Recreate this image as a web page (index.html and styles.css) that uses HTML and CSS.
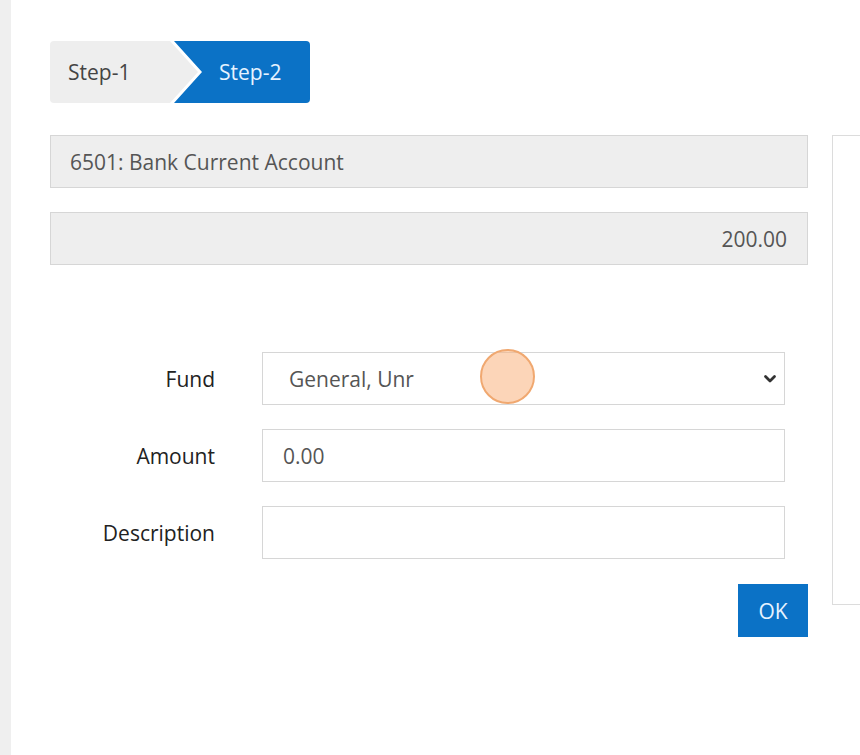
FILE: index.html
```html
<!DOCTYPE html>
<html>
<head>
<meta charset="utf-8">
<link rel="stylesheet" href="styles.css">
</head>
<body>
<div class="page">
  <div class="sidebar"></div>
  <div class="main">
    <div class="steps">
      <div class="step step-1">Step-1</div>
      <div class="step step-2">Step-2</div>
    </div>
    <div class="content">
      <div class="form-col">
        <div class="readonly">6501: Bank Current Account</div>
        <div class="readonly right">200.00</div>
        <div class="form">
          <label class="label">Fund</label>
          <div class="select-wrap">
            <select class="control select"><option>General, Unr</option></select>
            <svg class="chevron" width="14" height="10" viewBox="0 0 14 10"><path d="M2.5 2.5 L7 7 L11.5 2.5" fill="none" stroke="#333" stroke-width="2.8" stroke-linecap="round" stroke-linejoin="round"/></svg>
            <span class="cursor-dot"></span>
          </div>
          <label class="label">Amount</label>
          <input class="control" type="text" value="0.00">
          <label class="label">Description</label>
          <input class="control" type="text" value="">
        </div>
        <div class="actions"><button class="ok">OK</button></div>
      </div>
      <div class="side-panel"></div>
    </div>
  </div>
</div>
</body>
</html>
```
FILE: styles.css
```css
* { box-sizing: border-box; }
html, body { margin: 0; padding: 0; background: #fff; }
body { font-family: "Open Sans", "Liberation Sans", sans-serif; }

.page { display: flex; width: 860px; height: 755px; overflow: hidden; }
.sidebar { width: 11px; flex-shrink: 0; background: #efefef; }
.main { flex: 1; min-width: 0; padding: 41px 0 0 39px; }

.steps { display: flex; height: 62px; margin-bottom: 32px; }
.step { height: 62px; display: flex; align-items: center; font-size: 21px; }
.step-1 {
  width: 148px; padding-left: 18px; background: #eeeeee; color: #444;
  clip-path: polygon(0 0, 120px 0, 148px 31px, 120px 62px, 0 62px);
  border-radius: 4px 0 0 4px;
}
.step-2 {
  width: 136px; margin-left: -24px; padding-left: 45px; background: #0b72c6; color: #e6f3ff;
  clip-path: polygon(0 0, 100% 0, 100% 100%, 0 100%, 28px 31px);
  border-radius: 0 4px 4px 0;
}

.content { display: flex; gap: 24px; }
.form-col { width: 758px; flex-shrink: 0; }
.side-panel { width: 300px; height: 470px; flex-shrink: 0; border: 1px solid #dcdcdc; }

.readonly {
  height: 53px; background: #eeeeee; border: 1px solid #d6d6d6;
  padding: 0 19px; display: flex; align-items: center;
  font-size: 21px; color: #555; margin-bottom: 24px;
}
.readonly.right { justify-content: flex-end; padding-right: 20px; margin-bottom: 0; }

.form {
  display: grid; grid-template-columns: 165px 1fr; column-gap: 47px; row-gap: 24px;
  margin-top: 87px; padding-right: 23px;
}
.label { display: flex; align-items: center; justify-content: flex-end; font-size: 21px; color: #222; }
.control {
  height: 53px; width: 100%; border: 1px solid #d6d6d6; background: #fff;
  font-family: inherit; font-size: 21px; color: #555; padding: 0 20px; margin: 0; outline: none;
}
.select-wrap { position: relative; }
.select { appearance: none; -webkit-appearance: none; padding-left: 26px; border-radius: 0; }
.chevron { position: absolute; right: 8px; top: 22px; pointer-events: none; }
.cursor-dot {
  position: absolute; left: 218px; top: -3px; width: 55px; height: 55px; border-radius: 50%;
  background: rgba(250, 178, 125, 0.55); border: 2px solid #f0a870; pointer-events: none;
}

.actions { display: flex; justify-content: flex-end; margin-top: 25px; }
.ok {
  width: 70px; height: 53px; border: none; background: #0b72c6; color: #e6f3ff;
  font-family: inherit; font-size: 21px; padding: 0;
}
```
